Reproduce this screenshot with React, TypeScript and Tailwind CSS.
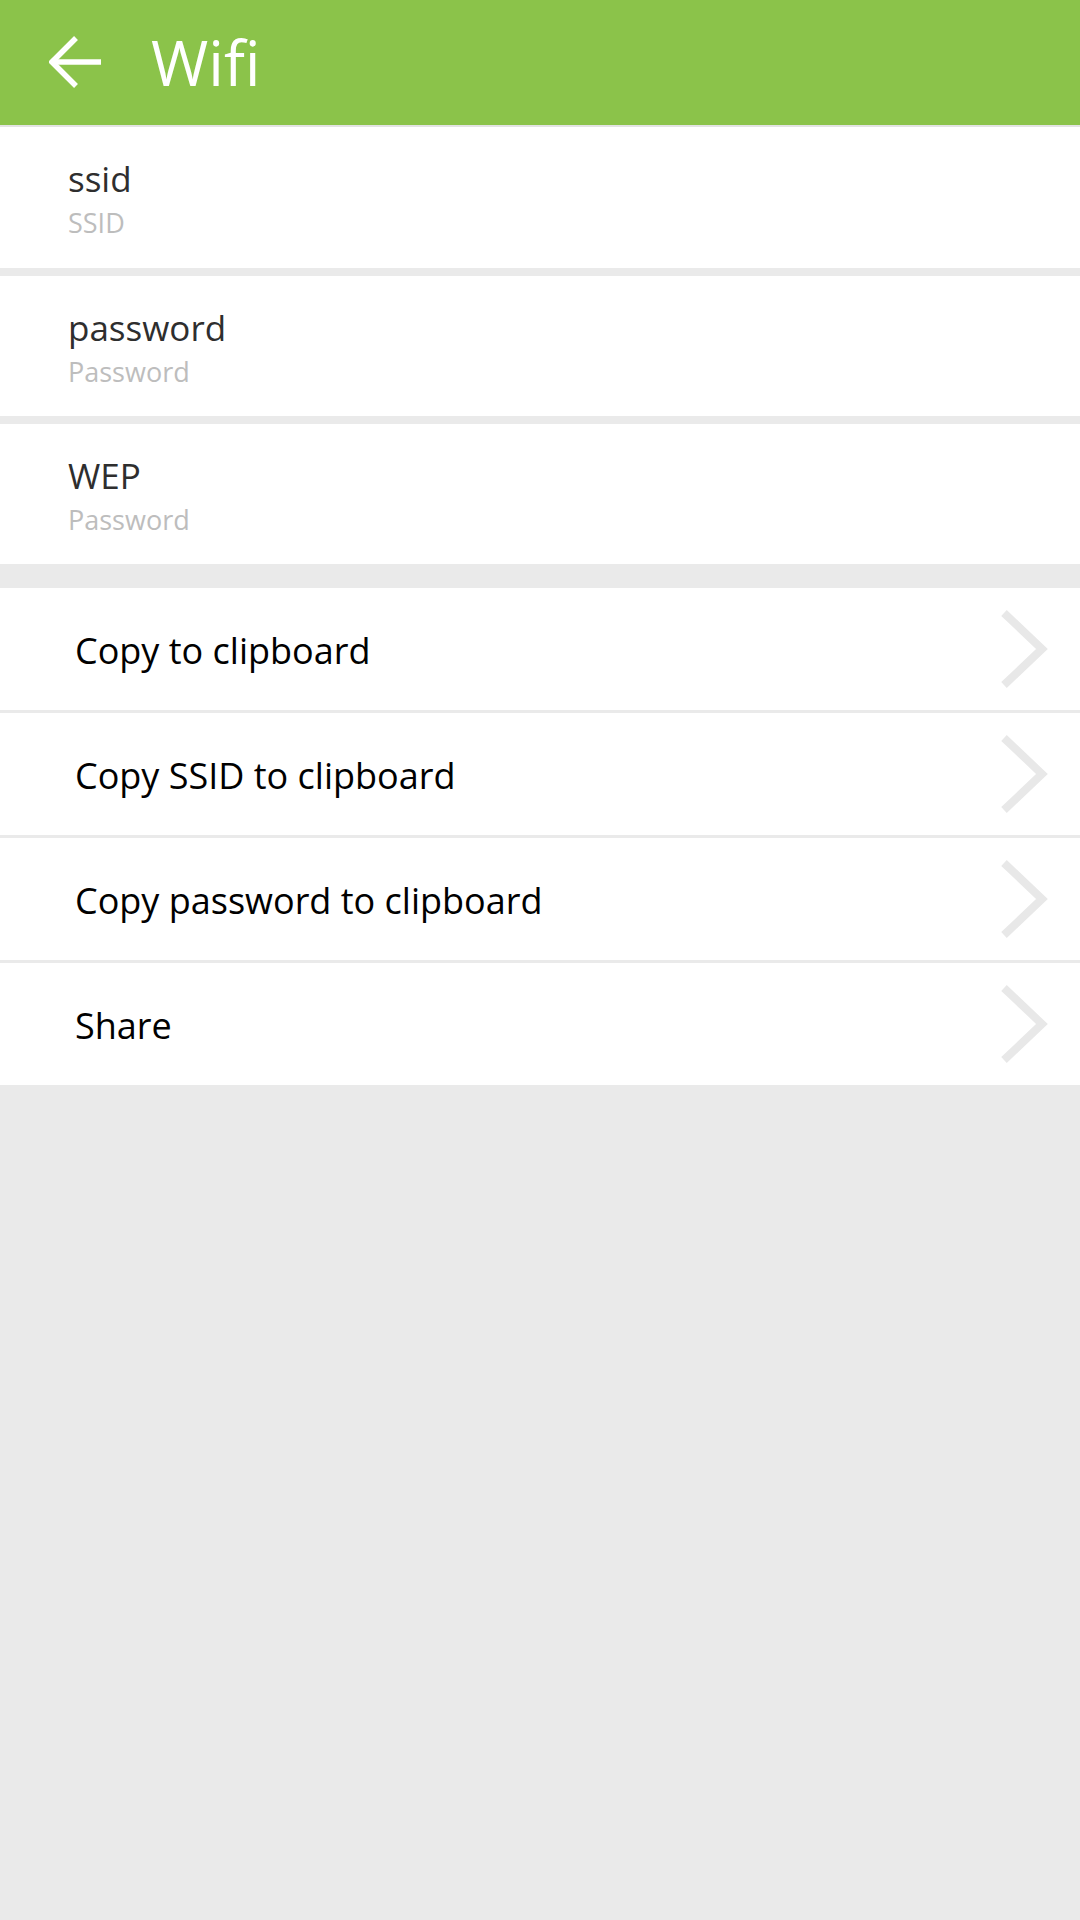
import React from "react";

const font = { fontFamily: '"Open Sans", "Noto Sans", sans-serif' };

function InfoRow({ title, sub, h }: { title: string; sub: string; h: string }) {
  return (
    <div className={`${h} bg-white pl-[68px] pt-[30px]`}>
      <div className="text-[35px] leading-[44px] text-[#2e2e2e]">{title}</div>
      <div className="text-[27px] leading-[34px] text-[#bdbdbd] mt-[5px]">{sub}</div>
    </div>
  );
}

function Chevron() {
  return (
    <svg width="52" height="84" viewBox="0 0 52 84" className="shrink-0">
      <path d="M6 6 L44 42 L6 78" fill="none" stroke="#e8e8e8" strokeWidth="8" strokeLinecap="butt" strokeLinejoin="miter" />
    </svg>
  );
}

function ActionRow({ label }: { label: string }) {
  return (
    <div className="h-[122px] bg-white flex items-center pl-[75px] pr-[30px]">
      <div className="flex-1 text-[36px] leading-[44px] text-black pt-[4px]">{label}</div>
      <Chevron />
    </div>
  );
}

export default function App() {
  return (
    <div className="w-[1080px] min-h-[1920px] bg-[#eaeaea]" style={font}>
      <header className="h-[125px] bg-[#8bc34a] flex items-center">
        <svg width="54" height="54" viewBox="0 0 54 54" className="ml-[49px]">
          <path d="M3 26 L52 26" stroke="white" strokeWidth="5.5" fill="none" />
          <path d="M27 2 L3 26 L27 50" stroke="white" strokeWidth="5.5" fill="none" strokeLinejoin="miter" />
        </svg>
        <span className="ml-[48px] text-[62px] leading-none text-white pb-[2px]">Wifi</span>
      </header>
      <div className="h-[2px] bg-[#e3e3e3]" />
      <div className="flex flex-col gap-[8px]">
        <InfoRow title="ssid" sub="SSID" h="h-[141px]" />
        <InfoRow title="password" sub="Password" h="h-[140px]" />
        <InfoRow title="WEP" sub="Password" h="h-[140px]" />
      </div>
      <div className="mt-[24px] flex flex-col gap-[3px]">
        <ActionRow label="Copy to clipboard" />
        <ActionRow label="Copy SSID to clipboard" />
        <ActionRow label="Copy password to clipboard" />
        <ActionRow label="Share" />
      </div>
    </div>
  );
}
